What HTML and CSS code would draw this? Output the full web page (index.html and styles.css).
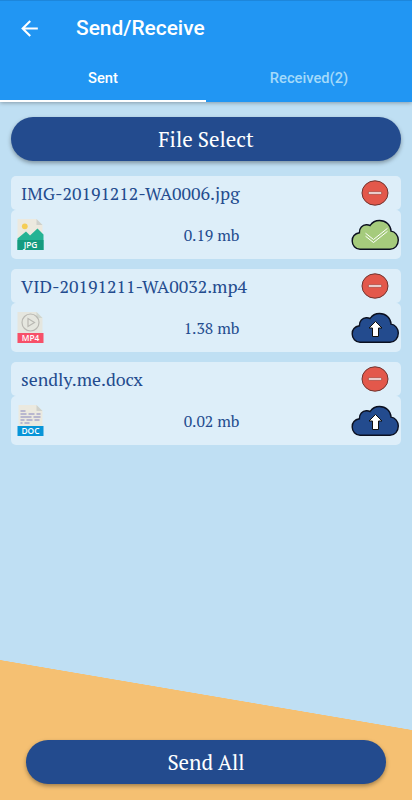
FILE: index.html
```
<!DOCTYPE html>
<html lang="en">

<head>
    <meta charset="UTF-8">
    <meta name="viewport" content="width=device-width, initial-scale=1.0">
    <title>Send/Receive</title>
    <link rel="stylesheet" href="styles.css">
</head>

<body>
    <!-- shared shapes -->
    <svg class="sprite" width="0" height="0">
        <symbol id="remove" viewBox="0 0 28 28">
            <ellipse cx="14" cy="14" rx="13" ry="12.2" fill="#e3584b" stroke="#70342f" stroke-width="1"/>
            <rect x="7.3" y="12.8" width="13.4" height="2.4" rx="1" fill="#fff0ee" stroke="#82342e" stroke-width=".6"/>
        </symbol>
        <symbol id="cloud" viewBox="0 0 48 32">
            <path d="M9 30.300C4.500 30.300 1.200 26.500 1.200 22c0-4.300 2.900-7.400 7.200-8.200C8.200 9 11.500 6 15.200 5.800c1.500-.1 2.800.2 3.900.7C21 3.500 24.500 1.500 28.500 1.500c6.300 0 11.300 4.700 11.500 10.600 4.200.4 7.300 4.500 7.300 9 0 5.100-3.500 9.200-8.300 9.200z"/>
        </symbol>
        <symbol id="arrow" viewBox="0 0 48 32">
            <path d="M24.500 9.500L31 16h-3.500v8.500h-6V16H18z" fill="#fff" stroke="#111" stroke-width="1"/>
        </symbol>
    </svg>

    <header class="appbar">
        <div class="appbar_top">
            <svg class="back" viewBox="0 0 24 24"><path d="M20 11H7.830l5.590-5.590L12 4l-8 8 8 8 1.410-1.410L7.830 13H20z" fill="#fff"/></svg>
            <h1 class="title">Send/Receive</h1>
        </div>
        <nav class="tabs">
            <div class="tab active">Sent</div>
            <div class="tab">Received(2)</div>
        </nav>
    </header>

    <main class="content">
        <button class="btn">File Select</button>

        <div class="file">
            <div class="file_head">
                <span class="file_name">IMG-20191212-WA0006.jpg</span>
                <svg class="remove"><use href="#remove"/></svg>
            </div>
            <div class="file_body">
                <svg class="type" viewBox="0 0 26 31">
                    <path d="M0 0h19l6 6v25H0z" fill="#ece9df"/>
                    <path d="M19 0v6h6z" fill="#cfd1cc"/>
                    <circle cx="7.300" cy="7.300" r="2.900" fill="#f5cd55"/>
                    <path d="M0 19.500L8.500 12.500l4 4 7.500-7 6 6V31H0z" fill="#25b394"/>
                    <path d="M0 21h26v10H0z" fill="#159b7f"/>
                    <text x="13" y="29" class="type_text">JPG</text>
                </svg>
                <span class="file_size">0.19 mb</span>
                <svg class="cloud done" viewBox="0 0 48 32">
                    <use href="#cloud"/>
                    <path class="check" d="M14.500 14.200l8 6.300 14-11.200M14.500 17.200l8 6.300 14-11.200"/>
                </svg>
            </div>
        </div>

        <div class="file">
            <div class="file_head">
                <span class="file_name">VID-20191211-WA0032.mp4</span>
                <svg class="remove"><use href="#remove"/></svg>
            </div>
            <div class="file_body">
                <svg class="type" viewBox="0 0 26 31">
                    <path d="M0 0h19l6 6v25H0z" fill="#e5e6df"/>
                    <path d="M19 0v6h6z" fill="#d0d6cf"/>
                    <circle cx="13" cy="10.500" r="8.500" fill="none" stroke="#b9b8b3" stroke-width="1.200"/>
                    <path d="M10.500 6.500v8l6.500-4z" fill="none" stroke="#b9b8b3" stroke-width="1.200"/>
                    <path d="M0 21h26v10H0z" fill="#f75069"/>
                    <text x="13" y="29" class="type_text">MP4</text>
                </svg>
                <span class="file_size">1.38 mb</span>
                <svg class="cloud" viewBox="0 0 48 32"><use href="#cloud"/><use href="#arrow"/></svg>
            </div>
        </div>

        <div class="file">
            <div class="file_head">
                <span class="file_name">sendly.me.docx</span>
                <svg class="remove"><use href="#remove"/></svg>
            </div>
            <div class="file_body">
                <svg class="type" viewBox="0 0 26 31">
                    <path d="M1 0h18l6 6v25H1z" fill="#ebe9df"/>
                    <path d="M19 0v6h6z" fill="#cfd1cc"/>
                    <path d="M3 6h5M3 9h6M11 9h6M19 9h4M3 12h11M16 12h7M3 15h4M9 15h6M17 15h5M3 18h2M7 18h5" stroke="#8585c0" stroke-width="1.100"/>
                    <path d="M0 21h26v10H0z" fill="#0895d8"/>
                    <text x="13" y="29" class="type_text">DOC</text>
                </svg>
                <span class="file_size">0.02 mb</span>
                <svg class="cloud" viewBox="0 0 48 32"><use href="#cloud"/><use href="#arrow"/></svg>
            </div>
        </div>
    </main>

    <footer class="bottom">
        <button class="btn">Send All</button>
    </footer>
</body>

</html>
```
FILE: styles.css
```
* {
    box-sizing: border-box;
}

body {
    margin: 0;
    height: 800px;
    display: flex;
    flex-direction: column;
    overflow: hidden;
    font-family: "PT Serif", "Liberation Serif", serif;
    color: #234b8e;
    /* sand slope at the bottom */
    background: linear-gradient(to top right, #f5c072 49.8%, #bfdff3 50.2%) 0 660px / 412px 70px no-repeat,
        linear-gradient(#bfdff3 700px, #f5c072 700px);
}

.sprite {
    position: absolute;
}

.appbar {
    height: 102px;
    background-color: #2196f3;
    border-top: 1px solid #1d86db;
    box-shadow: 0 1px 4px rgba(0, 0, 0, 0.3);
    font-family: Roboto, sans-serif;
    color: #fff;
}

.appbar_top {
    display: flex;
    align-items: center;
    height: 54px;
    padding-left: 17px;
}

.back {
    width: 25px;
    height: 25px;
    margin-right: 34px;
}

.title {
    margin: 0;
    font-size: 20.9px;
    font-weight: 500;
    line-height: 24px;
}

.tabs {
    display: flex;
    height: 47px;
}

.tab {
    flex: 1;
    text-align: center;
    font-size: 14.7px;
    font-weight: 500;
    line-height: 47px;
    color: #a4dafa;
    border-bottom: 2px solid transparent;
}

.tab.active {
    color: #fff;
    border-bottom-color: #fff;
}

.content {
    flex: 1;
    padding: 15px 11px 0;
}

.btn {
    display: block;
    width: 100%;
    height: 44px;
    padding: 0;
    border: 0;
    border-radius: 22px;
    background-color: #234b8e;
    color: #fff;
    font-family: inherit;
    font-size: 20.9px;
    line-height: 44px;
    box-shadow: 0 2px 4px rgba(0, 0, 0, 0.35);
    margin-bottom: 15px;
}

.file {
    margin-bottom: 10px;
}

.file_head,
.file_body {
    display: flex;
    align-items: center;
    justify-content: space-between;
    background-color: #ddeef9;
    border-radius: 5px;
}

.file_head {
    height: 34px;
    padding: 0 12px 0 10px;
}

.file_body {
    height: 49px;
    padding: 0 2px 0 6px;
}

.file_name {
    font-size: 17.8px;
    padding-top: 1px;
}

.file_size {
    font-size: 15.8px;
    padding-top: 1px;
    padding-left: 28px;
}

.remove {
    width: 28px;
    height: 28px;
}

.type {
    width: 27px;
    height: 31px;
}

.type_text {
    font: 600 8.4px "Open Sans", sans-serif;
    fill: #fff;
    text-anchor: middle;
}

.cloud {
    width: 48px;
    height: 32px;
    fill: #234b8e;
    stroke: #0b1020;
    stroke-width: 1.4;
}

.cloud.done {
    fill: #a5cb7c;
}

.check {
    fill: none;
    stroke: #fff;
    stroke-width: 1;
}

.bottom {
    padding: 0 26px 1px;
}
```
